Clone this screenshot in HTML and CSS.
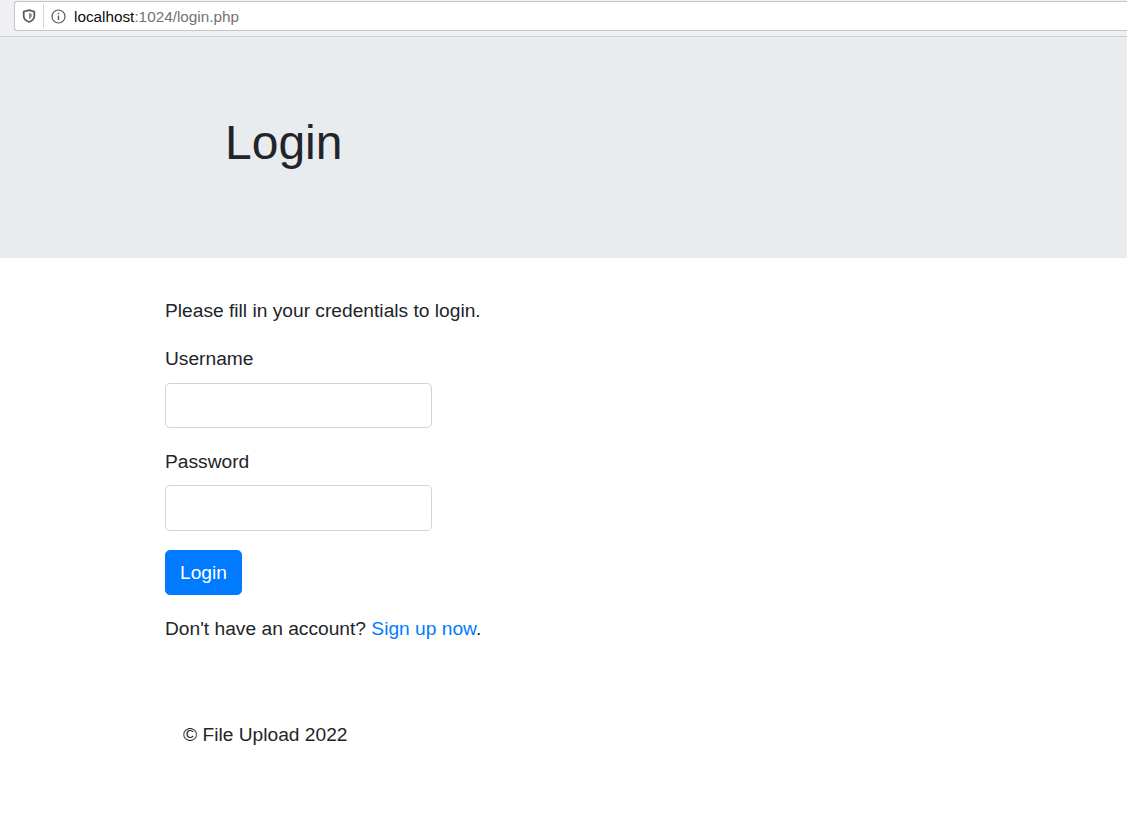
FILE: index.html
```html
<!DOCTYPE html>
<html lang="en">
<head>
	<meta charset="UTF-8">
	<meta name="viewport" content="width=device-width, initial-scale=1.0">
	<link rel="stylesheet" href="styles.css">
	<title>Login</title>
</head>
<body>
	<div class="toolbar">
		<div class="urlbar">
			<svg class="icon-shield" width="14" height="14" viewBox="0 0 14 14" aria-hidden="true">
				<path d="M7 1.200 L12.300 2.600 V7 C12.300 9.800 10 11.800 7 13 C4 11.800 1.700 9.800 1.700 7 V2.600 Z" fill="none" stroke="#5b5b5f" stroke-width="1.800"/>
				<path d="M7 4 L9.700 4.700 V7 C9.700 8.300 8.600 9.400 7 10.200 Z" fill="#8a8a8d"/>
			</svg>
			<span class="urlbar-sep"></span>
			<svg class="icon-info" width="15" height="15" viewBox="0 0 15 15" aria-hidden="true">
				<circle cx="7.500" cy="7.500" r="6.500" fill="none" stroke="#5b5b5f" stroke-width="1.200"/>
				<rect x="6.800" y="6.500" width="1.400" height="4.500" fill="#5b5b5f"/>
				<rect x="6.800" y="3.800" width="1.400" height="1.500" fill="#5b5b5f"/>
			</svg>
			<span class="url"><span class="url-host">localhost</span>:1024/login.php</span>
		</div>
	</div>
	<header class="jumbotron">
		<h1>Login</h1>
	</header>
	<main class="wrapper">
		<p>Please fill in your credentials to login.</p>
		<form>
			<div class="form-group">
				<label for="username">Username</label>
				<input id="username" type="text">
			</div>
			<div class="form-group">
				<label for="password">Password</label>
				<input id="password" type="password">
			</div>
			<div class="form-group form-group-btn">
				<button type="button" class="btn">Login</button>
			</div>
			<p>Don't have an account? <a href="#">Sign up now</a>.</p>
		</form>
	</main>
	<footer>
		<p>© File Upload 2022</p>
	</footer>
</body>
</html>
```

FILE: styles.css
```css
* {
	box-sizing: border-box;
}

body {
	margin: 0;
	background: #fff;
	color: #212529;
	font-family: "Liberation Sans", Arial, sans-serif;
	font-size: 19.2px;
	line-height: 1.5;
}

p {
	margin: 0 0 19.2px;
}

a {
	color: #007bff;
	text-decoration: none;
}

.toolbar {
	height: 37px;
	padding: 1px 0 0 14px;
	background: #f0f0f2;
	border-bottom: 1px solid #cfcfd1;
}

.urlbar {
	display: flex;
	align-items: center;
	height: 30px;
	padding-left: 7px;
	background: #fff;
	border: 1px solid #c6c6c8;
	border-right: none;
	border-radius: 3px 0 0 3px;
}

.urlbar-sep {
	width: 1px;
	height: 24px;
	margin: 0 7px 0 7px;
	background: #d4d4d6;
}

.url {
	margin: 2px 0 0 8px;
	color: #737373;
	font-size: 15.3px;
	line-height: 20px;
}

.url-host {
	color: #0c0c0d;
}

.jumbotron {
	height: 221px;
	padding: 77px 0 0 225px;
	background: #e9ecef;
}

h1 {
	margin: 0;
	font-size: 48px;
	font-weight: 400;
	line-height: 1.2;
}

.wrapper {
	width: 350px;
	padding: 39px 0 0;
	margin-left: 165px;
}

label {
	display: block;
	margin-bottom: 8.8px;
}

.form-group {
	margin-bottom: 19.2px;
}

.form-group-btn {
	margin-bottom: 20px;
}

input {
	display: block;
	width: 267px;
	height: 45.8px;
	padding: 6px 12px;
	font: inherit;
	border: 1px solid #ced4da;
	border-radius: 4.8px;
}

.btn {
	display: block;
	height: 45px;
	padding: 7px 14px 5px;
	font: inherit;
	color: #fff;
	background: #007bff;
	border: 1px solid #007bff;
	border-radius: 4.8px;
}

footer {
	margin-top: 77px;
	padding-left: 183px;
}
```
